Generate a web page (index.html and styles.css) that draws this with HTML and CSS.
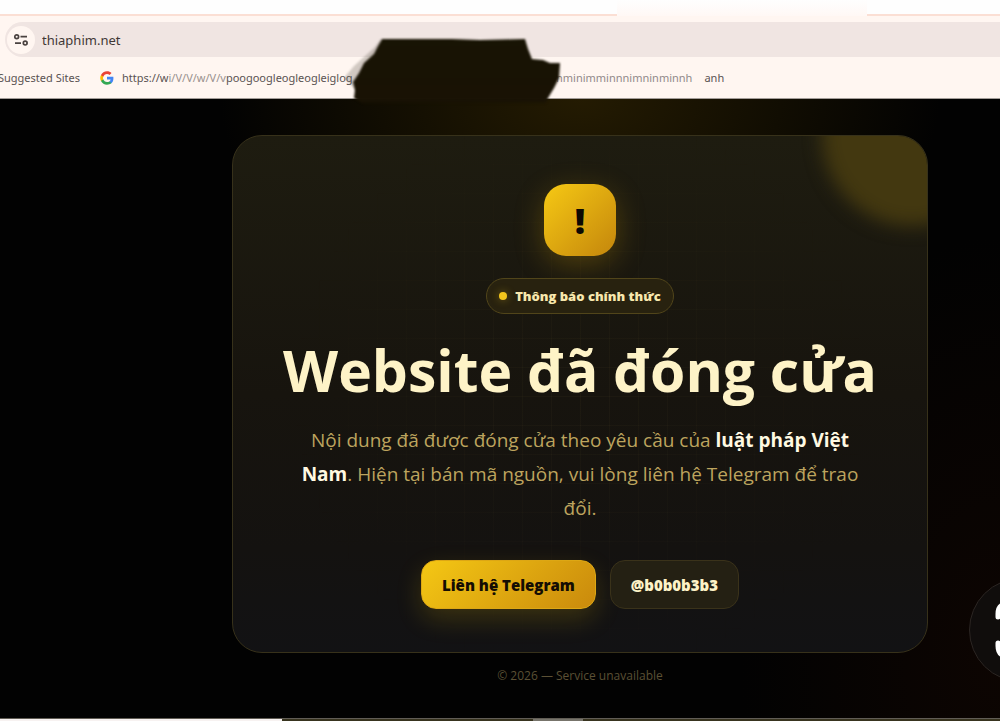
FILE: index.html
```html
<!DOCTYPE html>
<html lang="vi">
<head>
<meta charset="utf-8">
<title>thiaphim.net</title>
<link rel="stylesheet" href="styles.css">
</head>
<body>
<header class="browser">
  <div class="tabstrip"><span class="active-tab"></span></div>
  <div class="toolbar">
    <div class="omnibox">
      <button class="site-info" type="button" aria-label="Site information">
        <svg width="16" height="16" viewBox="0 0 16 16" fill="none" stroke="#4a4240" stroke-width="1.7">
          <circle cx="3.7" cy="4.7" r="1.9"/><path d="M7.500 4.700H14M2 11.100h6"/><circle cx="12.2" cy="11.1" r="1.9"/>
        </svg>
      </button>
      <input class="address" type="text" aria-label="Address" value="thiaphim.net">
    </div>
  </div>
  <nav class="bookmarks">
    <a class="bookmark suggested" href="#">Suggested Sites</a>
    <a class="bookmark google" href="#">
      <svg width="14" height="14" viewBox="0 0 48 48">
        <path fill="#4285f4" d="M46 24.500c0-1.600-.1-3-.4-4.500H24v9h12.400c-.6 3-2.200 5.300-4.700 7v6h7.600C43.700 38 46 31.800 46 24.500z"/>
        <path fill="#34a853" d="M24 47c6.300 0 11.500-2 15.300-5.600l-7.500-5.800c-2 1.400-4.700 2.300-7.800 2.300-6 0-11-4-12.900-9.500H3.400v6C7.200 42 15 47 24 47z"/>
        <path fill="#fbbc04" d="M11.100 28.400c-1-2.900-1-6 0-8.900v-6H3.400a23 23 0 0 0 0 20.800z"/>
        <path fill="#ea4335" d="M24 10.100c3.400 0 6.500 1.200 8.900 3.500l6.600-6.600C35.500 3.200 30.300 1 24 1 15 1 7.200 6.100 3.400 13.600l7.700 6C13 14.100 18 10.100 24 10.100z"/>
      </svg>
      <span>https://w<span class="faded">i/V/V/w/V/v</span>poogoogleogleogleiglog</span>
    </a>
    <a class="bookmark smeared" href="#">nminimminnnimninminnh</a>
    <a class="bookmark" href="#">anh</a>
  </nav>
  <svg class="scribble" width="220" height="72" viewBox="345 34 220 72">
    <defs>
      <filter id="soft" color-interpolation-filters="sRGB"><feGaussianBlur stdDeviation="0.8"/></filter>
      <linearGradient id="ink" gradientUnits="userSpaceOnUse" x1="0" y1="39" x2="0" y2="105"><stop offset="0" stop-color="#181404"/><stop offset=".93" stop-color="#191204"/><stop offset="1" stop-color="#191204" stop-opacity="0"/></linearGradient>
    </defs>
    <path d="M344 78l10-12 20-18 7-9v56l-24 2-2-8z" fill="#4a4438" opacity=".25" filter="url(#soft)"/>
    <path d="M382 39L452 39L480 40L525 39L528 49L532 59L543 60L550 63L560 63L559 78L554 88L548 98L545 105H365L354 98L355 90L353 82L359 73L364 63L374 54L377 48Z" fill="url(#ink)" filter="url(#soft)"/>
  </svg>
</header>
<main class="page">
  <section class="card">
    <div class="mark">!</div>
    <div class="badge"><span class="dot"></span>Thông báo chính thức</div>
    <h1 class="title">Website đã đóng cửa</h1>
    <p class="lead">Nội dung đã được đóng cửa theo yêu cầu của <strong>luật pháp Việt Nam</strong>. Hiện tại bán mã nguồn, vui lòng liên hệ Telegram để trao đổi.</p>
    <div class="actions">
      <a class="btn primary" href="#">Liên hệ Telegram</a>
      <a class="btn ghost" href="#">@b0b0b3b3</a>
    </div>
  </section>
  <footer class="foot">© 2026 — Service unavailable</footer>
  <button class="capture" type="button" aria-label="Capture">
    <svg width="44" height="60" viewBox="0 0 44 60" fill="none" stroke="#fff" stroke-width="5" stroke-linecap="round">
      <path d="M4 17v-3Q4 4 14 4M4 43v3q0 10 10 10"/>
    </svg>
  </button>
</main>
<div class="taskbar"><span class="task-light"></span><span class="task-dark"></span><span class="task-item"></span><span class="task-rest"></span></div>
</body>
</html>
```
FILE: styles.css
```css
* { box-sizing: border-box; }
body {
  margin: 0;
  min-height: 100vh;
  display: flex;
  flex-direction: column;
  overflow: hidden;
  background: #020202;
  font-family: "Open Sans", "Noto Sans", sans-serif;
}
a { color: inherit; text-decoration: none; }

.browser { position: relative; z-index: 1; background: #fff6f1; border-bottom: 1px solid #a39d99; }
.tabstrip {
  height: 16px;
  background: #fefefe;
  border-bottom: 2px solid #fbdfd4;
  display: flex;
}
.active-tab {
  height: 16px;
  width: 25%;
  margin-left: 61.7%;
  background: linear-gradient(#fefefe, #fff8f5);
}
.toolbar { padding: 6px 0 0 5px; }
.omnibox {
  height: 35px;
  display: flex;
  align-items: center;
  gap: 7px;
  padding-left: 2px;
  background: #f0e5e2;
  border-radius: 18px 0 0 18px;
}
.site-info {
  width: 28px;
  height: 28px;
  display: grid;
  place-items: center;
  padding: 0;
  border: 0;
  border-radius: 50%;
  background: #fff6f1;
}
.address {
  flex: 1;
  border: 0;
  padding: 0;
  background: none;
  font: 13px "Noto Sans", sans-serif;
  color: #3f3835;
}
.bookmarks {
  height: 41px;
  display: flex;
  align-items: center;
  font-family: "Noto Sans", sans-serif;
  font-size: 11px;
  color: #5a5351;
  white-space: nowrap;
}
.bookmark { display: flex; align-items: center; gap: 8px; }
.suggested { margin-left: -2px; }
.google { width: 456px; margin-left: 20px; }
.faded { color: #99918e; }
.smeared { color: #91898a; margin-right: 12px; }
.scribble { position: absolute; left: 345px; top: 34px; z-index: 2; }

.page {
  position: relative;
  flex: 1;
  overflow: hidden;
  padding: 36px 72px 0 232px;
  background:
    radial-gradient(ellipse 360px 210px at 580px 0, #241b02, transparent),
    radial-gradient(ellipse 260px 420px at 100% 90%, #0d0502, transparent),
    #020202;
}
.card {
  position: relative;
  overflow: hidden;
  display: flex;
  flex-direction: column;
  align-items: center;
  padding: 48px 48px 43px;
  border: 1px solid #37311a;
  border-radius: 30px;
  background: linear-gradient(#1e1c10, #17140e 50%, #141210 80%, #121214);
  text-align: center;
}
.card::before {
  content: "";
  position: absolute;
  inset: 0;
  background:
    repeating-linear-gradient(90deg, transparent 0 28px, rgba(255, 220, 120, .03) 28px 29px),
    repeating-linear-gradient(transparent 0 28px, rgba(255, 220, 120, .03) 28px 29px);
  -webkit-mask-image: radial-gradient(circle, #000, transparent 70%);
  mask-image: radial-gradient(circle, #000, transparent 70%);
}
.card::after {
  content: "";
  position: absolute;
  top: -90px;
  right: -75px;
  width: 180px;
  height: 180px;
  border-radius: 50%;
  background: #433810;
  filter: blur(9px);
}
.card > * { position: relative; }
.mark {
  width: 72px;
  height: 72px;
  display: grid;
  place-items: center;
  border-radius: 22px;
  background: linear-gradient(135deg, #f6c914, #c4860c);
  box-shadow: 0 8px 30px rgba(234, 179, 8, .26);
  color: #0c0903;
  font-size: 36px;
  font-weight: 800;
}
.badge {
  height: 36px;
  margin-top: 22px;
  padding: 0 12px;
  display: flex;
  align-items: center;
  gap: 8px;
  border: 1px solid #51451a;
  border-radius: 18px;
  background: #28220f;
  color: #f8e8ad;
  font-size: 13px;
  font-weight: 800;
}
.dot {
  width: 8px;
  height: 8px;
  border-radius: 50%;
  background: #f2c51c;
  box-shadow: 0 0 8px rgba(242, 197, 28, .4);
}
.title {
  margin: 21px 0 0;
  color: #fef3c7;
  font-size: 57px;
  line-height: 70px;
  font-weight: 700;
  white-space: nowrap;
}
.lead {
  max-width: 560px;
  margin: 18px 0 0;
  color: #bda45e;
  font-size: 19px;
  line-height: 34px;
}
.lead strong { color: #fff9e2; font-weight: 700; }
.actions { display: flex; gap: 14px; margin-top: 35px; }
.btn {
  height: 49px;
  display: flex;
  align-items: center;
  padding: 0 20px;
  border: 1px solid transparent;
  border-radius: 15px;
  font-size: 15px;
  font-weight: 800;
}
.primary {
  border-color: #dda714;
  background: linear-gradient(135deg, #f5c814, #c9890c);
  background-origin: border-box;
  box-shadow: 0 10px 26px rgba(220, 180, 8, .2);
  color: #140d03;
}
.ghost { border-color: #3a321a; background: #242013; color: #fef3c7; }
.foot { margin-top: 14px; text-align: center; font-size: 12px; line-height: 18px; color: #5b5034; }
.capture {
  position: absolute;
  right: -73px;
  bottom: 36px;
  width: 104px;
  height: 104px;
  display: flex;
  align-items: center;
  padding: 0 0 0 24px;
  border: 1px solid #2b2522;
  border-radius: 50%;
  background: #100d0c;
}
.taskbar { height: 3px; display: flex; border-top: 1px solid #615d55; }
.task-light { width: 28.2%; background: #f7f2f1; }
.task-dark { width: 25.1%; background: #38341f; }
.task-item { width: 5%; background: #77746b; }
.task-rest { flex: 1; background: #38341f; }
```
